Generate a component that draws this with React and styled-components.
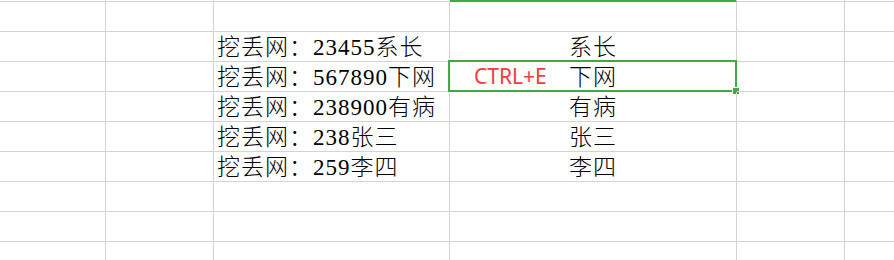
import React from 'react'
import styled, { createGlobalStyle } from 'styled-components'

const GlobalStyle = createGlobalStyle`
  html, body {
    margin: 0;
    padding: 0;
    background: #ffffff;
    overflow: hidden;
  }
`

const GREEN = '#43a843'
const LINE = '#d4d4d4'
const COLS = [106, 108, 236, 287, 108, 60]

const rows = [
  {},
  { full: '挖丢网：23455系长', part: '系长' },
  { full: '挖丢网：567890下网', part: '下网', selected: true },
  { full: '挖丢网：238900有病', part: '有病' },
  { full: '挖丢网：238张三', part: '张三' },
  { full: '挖丢网：259李四', part: '李四' },
  {},
  {},
  {},
]

const Sheet = styled.div`
  display: grid;
  grid-template-columns: ${COLS.map(w => w + 'px').join(' ')};
  grid-template-rows: 2px;
  grid-auto-rows: 30px;
  width: 894px;
  height: 260px;
  overflow: hidden;
  font-family: "Liberation Serif", "Noto Sans CJK SC", serif;
  font-size: 23px;
  font-weight: 300;
  letter-spacing: 1px;
  color: #000;
`

const Cell = styled.div`
  box-sizing: border-box;
  position: relative;
  border-right: 1px solid ${LINE};
  border-bottom: 1px solid ${LINE};
  display: flex;
  align-items: flex-end;
  justify-content: ${p => (p.$center ? 'center' : 'flex-start')};
  padding-left: ${p => (p.$center ? '0' : '3px')};
  line-height: 26px;
  white-space: nowrap;
`

const EdgeCell = styled.div`
  box-sizing: border-box;
  height: 2px;
  border-right: 1px solid ${LINE};
  border-bottom: 1px solid ${p => (p.$active ? GREEN : LINE)};
  background: ${p => (p.$active ? GREEN : 'transparent')};
`

const Selection = styled.div`
  position: absolute;
  left: -2px;
  top: -2px;
  right: -1px;
  bottom: -1px;
  border: 2px solid ${GREEN};
  pointer-events: none;
`

const FillHandle = styled.span`
  position: absolute;
  right: -4px;
  bottom: -4px;
  width: 6px;
  height: 6px;
  background: ${GREEN};
  outline: 1px solid #ffffff;
`

const Hint = styled.span`
  position: absolute;
  left: 24px;
  bottom: 3px;
  font-family: "Noto Sans", "Open Sans", sans-serif;
  font-size: 21px;
  font-weight: 400;
  letter-spacing: 0;
  line-height: 24px;
  color: #f23c3e;
`

const TopRow = styled.div`
  display: contents;
`

const App = () => {
  return (
    <>
      <GlobalStyle />
      <Sheet>
        <TopRow>
          {COLS.map((w, i) => (
            <EdgeCell key={i} $active={i === 3} />
          ))}
        </TopRow>
        {rows.map((r, ri) => (
          <React.Fragment key={ri}>
            <Cell />
            <Cell />
            <Cell>{r.full}</Cell>
            <Cell $center>
              {r.part}
              {r.selected && (
                <>
                  <Hint>CTRL+E</Hint>
                  <Selection>
                    <FillHandle />
                  </Selection>
                </>
              )}
            </Cell>
            <Cell />
            <Cell />
          </React.Fragment>
        ))}
      </Sheet>
    </>
  )
}

export default App
